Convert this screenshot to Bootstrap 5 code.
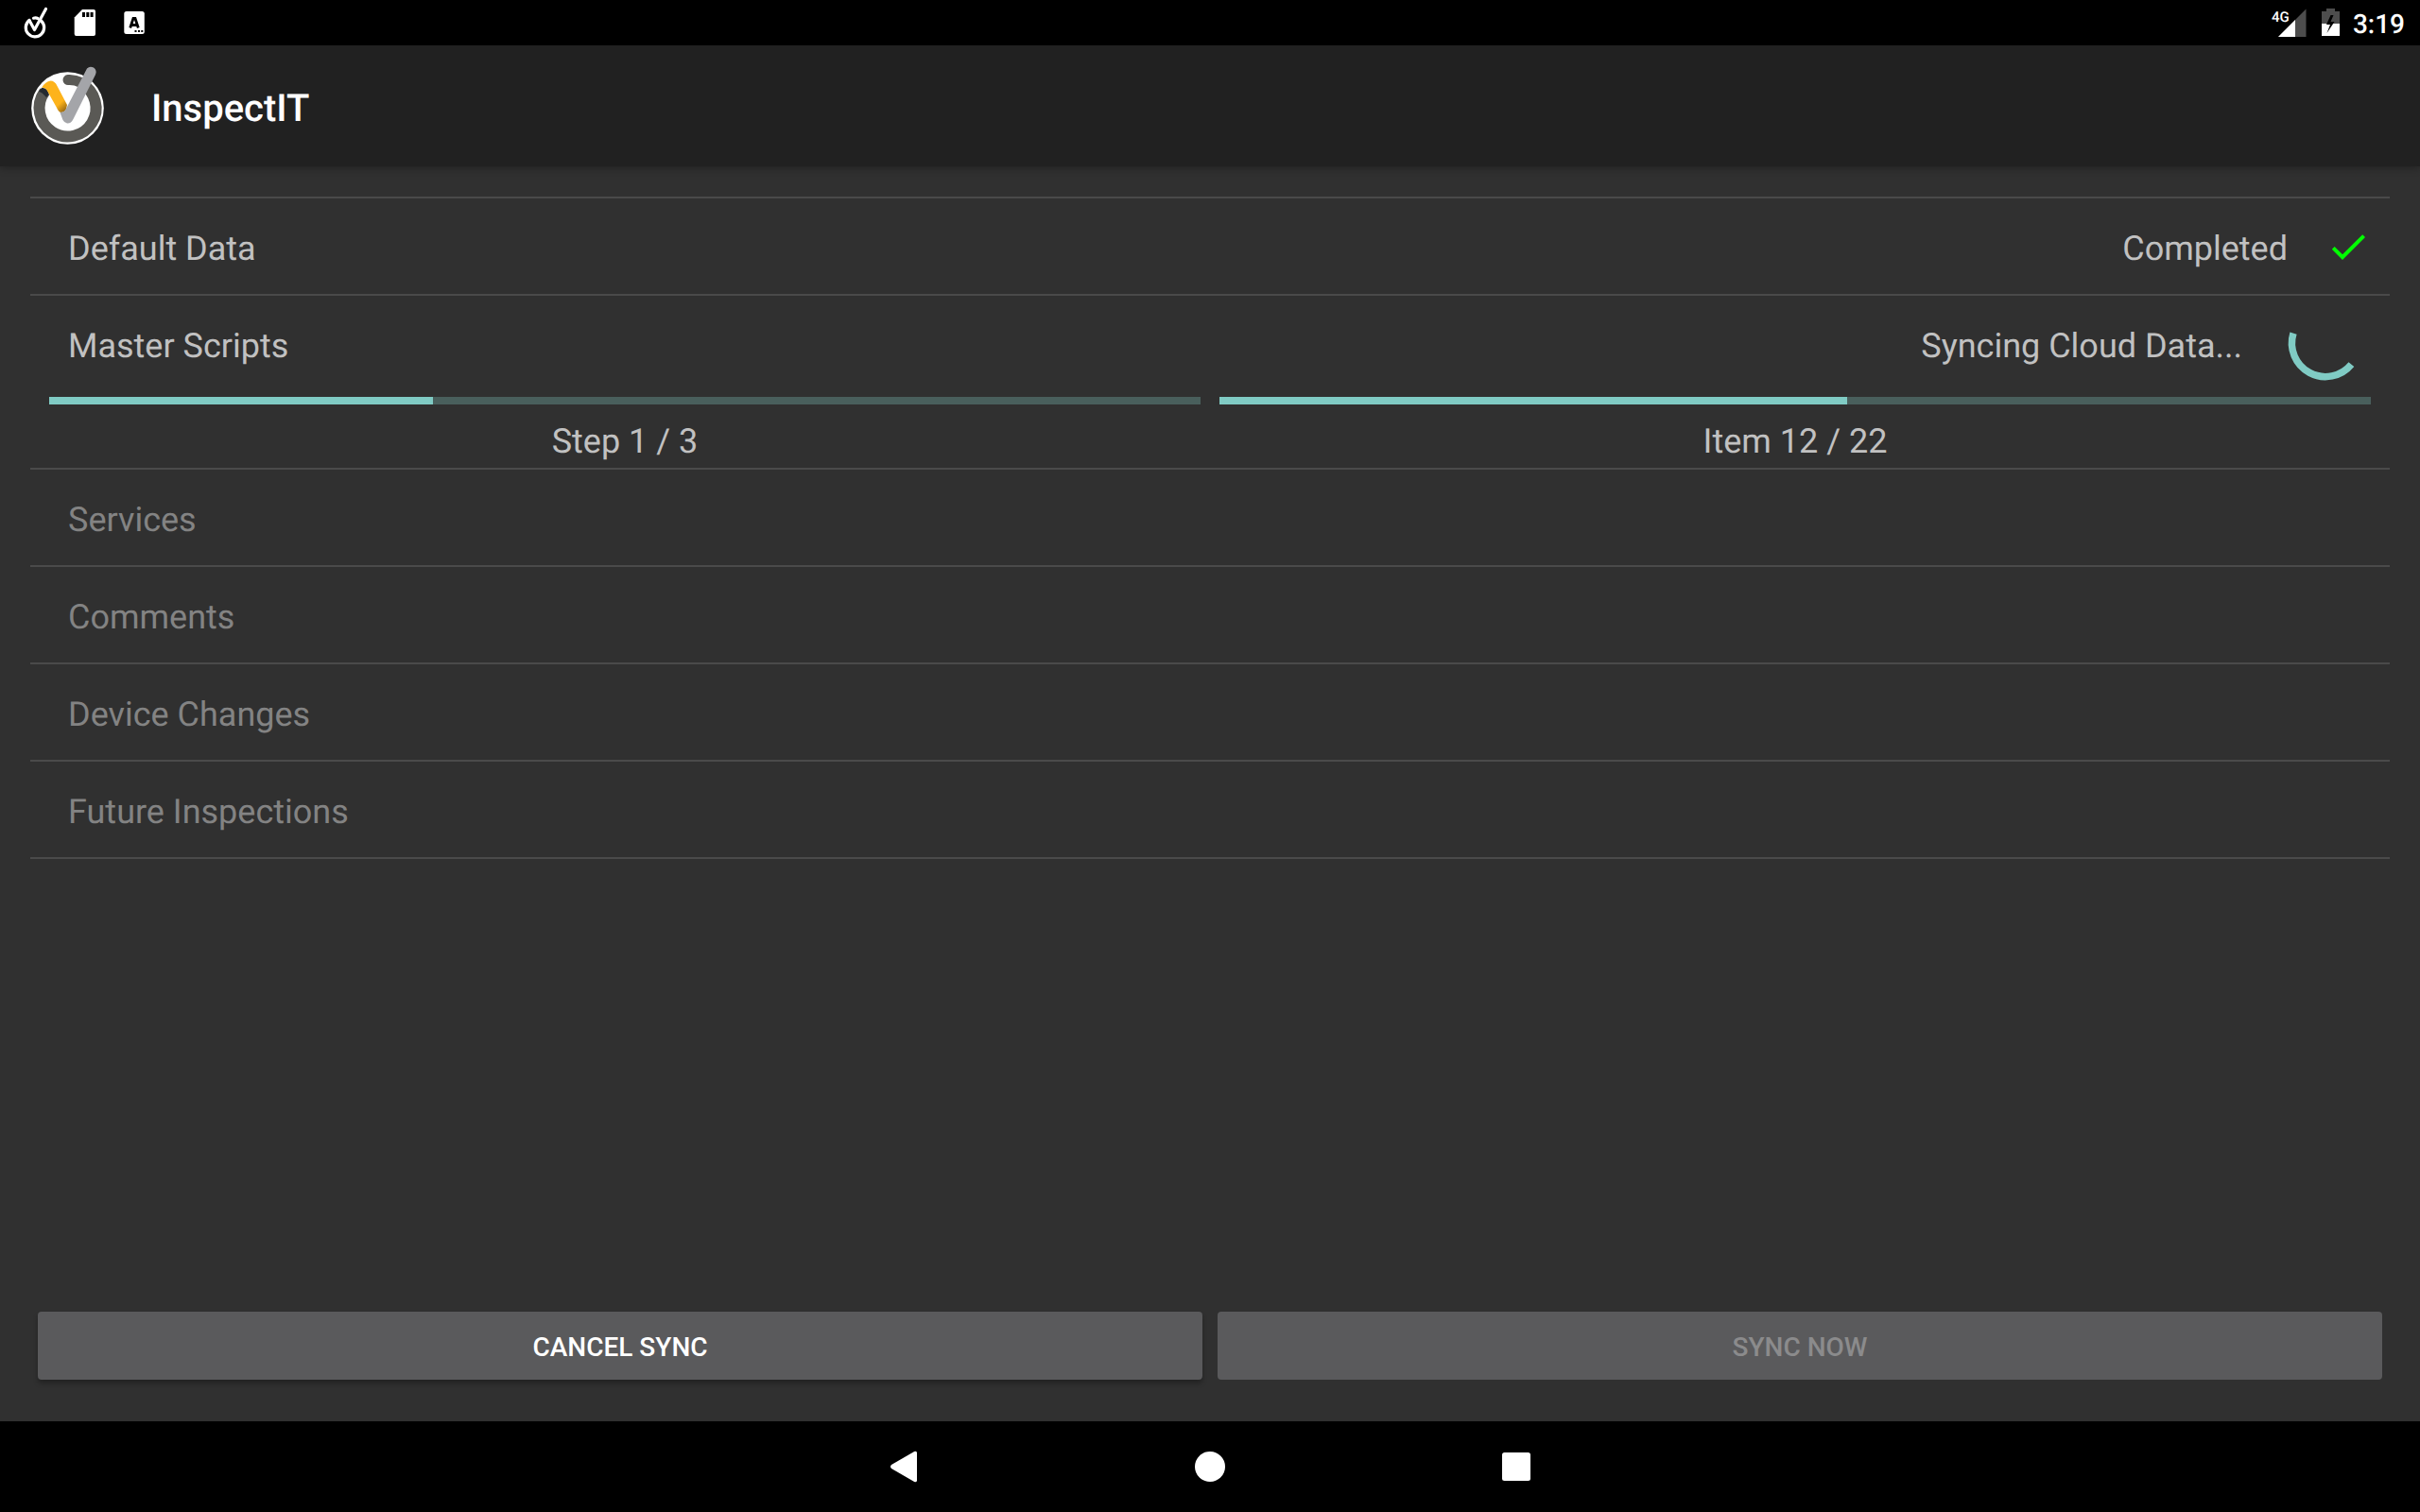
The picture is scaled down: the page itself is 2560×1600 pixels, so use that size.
<!DOCTYPE html>
<html lang="en">
<head>
<meta charset="utf-8">
<meta name="viewport" content="width=device-width, initial-scale=1">
<title>InspectIT</title>
<link href="https://cdn.jsdelivr.net/npm/bootstrap@5.3.0/dist/css/bootstrap.min.css" rel="stylesheet">
<style>
  body { background: #303030; color: #c1c1c1; font-family: Roboto, sans-serif; font-size: 36px; line-height: 42px; text-rendering: geometricPrecision; }
  svg { display: block; flex-shrink: 0; }
  .status-bar { height: 48px; padding: 0 16px 0 22px; font-size: 28px; line-height: 32px; font-weight: 500; }
  .status-left { gap: 22px; }
  .clock { padding-top: 3px; }
  .app-bar { height: 128px; padding: 0 32px; gap: 48px; background: #212121; box-shadow: 0 2px 8px rgba(0,0,0,.3); }
  .app-title { font-size: 40px; line-height: 48px; font-weight: 500; padding-top: 6px; }
  .sync-area { padding: 32px 32px 0; }
  .sync-list { border-top: 2px solid #4a4a4a; }
  .sync-item { border-bottom: 2px solid #4a4a4a; }
  .sync-line { height: 101px; padding: 0 20px; }
  .sync-name { padding: 32px 20px 0; }
  .sync-state { padding-top: 32px; }
  .sync-right { gap: 40px; }
  .check-slot { padding-top: 27px; }
  .spin-slot { padding-top: 2px; }
  .waiting { color: #838383; }
  .bars { gap: 20px; padding: 0 20px 7px; margin-top: 6px; }
  .progress { --bs-progress-height: 8px; --bs-progress-bg: #495f5c; --bs-progress-bar-bg: #80cbc4; --bs-progress-border-radius: 0; }
  .bar-label { padding-top: 18px; }
  .actions { gap: 16px; padding: 0 40px 44px; }
  .sync-btn { --bs-btn-bg: #5a5a5c; --bs-btn-color: #fff; --bs-btn-border-width: 0; --bs-btn-border-radius: 4px;
    --bs-btn-font-size: 28px; --bs-btn-font-weight: 500; --bs-btn-line-height: 32px;
    --bs-btn-hover-bg: #666668; --bs-btn-hover-color: #fff; --bs-btn-disabled-bg: #5a5a5c; --bs-btn-disabled-color: #8b8b8c; --bs-btn-disabled-opacity: 1;
    padding-top: 22px; padding-bottom: 18px; }
  .sync-btn:enabled { box-shadow: 0 4px 5px rgba(0,0,0,.28); }
  .nav-keys { height: 96px; gap: 164px; }
  .nav-key { width: 160px; }
</style>
<script src="https://cdn.jsdelivr.net/npm/bootstrap@5.3.0/dist/js/bootstrap.bundle.min.js" defer></script>
</head>
<body class="d-flex flex-column min-vh-100">

<div class="status-bar bg-black text-white d-flex align-items-center justify-content-between">
  <div class="status-left d-flex align-items-center">
    <svg width="30" height="48" viewBox="22 0 30 48" fill="none" stroke="#fff" aria-hidden="true">
      <path d="M31 21.500A9.700 9.700 0 1 0 43.500 22M35.500 19.200Q38 18.600 40 19.500" stroke-width="3.200" stroke-linecap="round"/>
      <path d="M31 21.500 36.500 31.500 48.500 9.500" stroke-width="3.200" stroke-linecap="round" stroke-linejoin="round"/>
    </svg>
    <svg width="30" height="48" viewBox="74 0 30 48" aria-hidden="true">
      <path d="M87 10h12q2 0 2 2v24q0 2-2 2H80.700q-2 0-2-2V18.500z" fill="#fff"/>
      <path d="M87 13h3v5h-3zM91.300 13h3v5h-3zM95.600 13h3v5h-3z" fill="#000"/>
    </svg>
    <svg width="30" height="48" viewBox="126 0 30 48" aria-hidden="true">
      <rect x="131.300" y="12" width="21.500" height="24" rx="2.500" fill="#fff"/>
      <path d="M137.700 29.500 141 19.500h2L146.300 29.500M139.500 26.500h5" fill="none" stroke="#000" stroke-width="2.800"/>
      <path d="M142.500 32h2v2h-2zM146 32h2v2h-2zM149.300 32h2v2h-2z" fill="#000"/>
    </svg>
  </div>
  <div class="d-flex align-items-center">
    <svg width="89" height="48" viewBox="2400 0 89 48" role="img" aria-label="4G signal, battery charging">
      <path d="M2410 39 2439.500 9.500V39z" fill="#4d4d4d"/>
      <path d="M2410 39 2428 21V39z" fill="#fff"/>
      <text x="2403" y="23" font-size="15" font-weight="500" fill="#fff">4G</text>
      <path d="M2456 12h5V9h9v3h5v13h-19z" fill="#4d4d4d"/>
      <path d="M2456 25h19v13h-19z" fill="#fff"/>
      <path d="M2465.500 16 2461 26h4l-3.500 9 8-12h-4l3-7z" fill="#000"/>
    </svg>
    <span class="clock">3:19</span>
  </div>
</div>

<header class="app-bar d-flex align-items-center">
  <svg width="80" height="128" viewBox="32 48 80 128" role="img" aria-label="InspectIT logo">
    <defs>
      <linearGradient id="gold" x1="46" y1="92" x2="68" y2="116" gradientUnits="userSpaceOnUse">
        <stop offset="0" stop-color="#fdb31b"/><stop offset=".75" stop-color="#fdb31b"/><stop offset="1" stop-color="#a87414"/>
      </linearGradient>
    </defs>
    <circle cx="71.500" cy="114.500" r="38.300" fill="#fff"/>
    <path d="M47.200 97A30 30 0 1 0 86 88.200" fill="none" stroke="#5a5955" stroke-width="12"/>
    <path d="M72 84.500Q79 84 86 87.500" fill="none" stroke="#5a5955" stroke-width="11" stroke-linecap="round"/>
    <path d="M44 93Q50 92 52 100L49 103Q44 97 41 97z" fill="#252a30"/>
    <path d="M44 93Q48 86 53.500 85.500Q58 85.500 60.500 91L71 111Q70 119 65 119Q62 119 60 114L50.500 97Q48 92 44 93z" fill="url(#gold)"/>
    <path d="M66 118.500Q69 118 71 113L92 72.500Q95 69.500 99 71.500Q103 74.500 101 79L77.500 126Q75 131 71 130.500Q68 130 66.500 127L63.500 119z" fill="#a4a5a9"/>
  </svg>
  <h1 class="app-title text-white mb-0">InspectIT</h1>
</header>

<main class="sync-area flex-grow-1">
  <ul class="sync-list list-unstyled m-0">
    <li class="sync-item">
      <div class="sync-line d-flex justify-content-between">
        <span class="sync-name">Default Data</span>
        <div class="sync-right d-flex">
          <span class="sync-state">Completed</span>
          <div class="check-slot">
            <svg width="48" height="48" viewBox="0 0 24 24" fill="#0f0" aria-hidden="true"><path d="M9 16.170 4.830 12l-1.420 1.410L9 19 21 7l-1.410-1.410z"/></svg>
          </div>
        </div>
      </div>
    </li>
    <li class="sync-item">
      <div class="sync-line d-flex justify-content-between">
        <span class="sync-name">Master Scripts</span>
        <div class="sync-right d-flex">
          <span class="sync-state">Syncing Cloud Data...</span>
          <div class="spin-slot" role="status" aria-label="Syncing">
            <svg width="96" height="96" viewBox="0 0 96 96" fill="none" stroke="#80cbc4" stroke-width="7.500"><path d="M14 37.700A35.500 35.500 0 0 0 75.400 70.600"/></svg>
          </div>
        </div>
      </div>
      <div class="bars d-flex text-center">
        <div class="flex-fill w-50">
          <div class="progress" role="progressbar" aria-label="Steps" aria-valuenow="1" aria-valuemin="0" aria-valuemax="3"><div class="progress-bar" style="width:33.333%"></div></div>
          <div class="bar-label">Step 1 / 3</div>
        </div>
        <div class="flex-fill w-50">
          <div class="progress" role="progressbar" aria-label="Items" aria-valuenow="12" aria-valuemin="0" aria-valuemax="22"><div class="progress-bar" style="width:54.545%"></div></div>
          <div class="bar-label">Item 12 / 22</div>
        </div>
      </div>
    </li>
    <li class="sync-item waiting"><div class="sync-line d-flex"><span class="sync-name">Services</span></div></li>
    <li class="sync-item waiting"><div class="sync-line d-flex"><span class="sync-name">Comments</span></div></li>
    <li class="sync-item waiting"><div class="sync-line d-flex"><span class="sync-name">Device Changes</span></div></li>
    <li class="sync-item waiting"><div class="sync-line d-flex"><span class="sync-name">Future Inspections</span></div></li>
  </ul>
</main>

<div class="actions d-flex">
  <button type="button" class="btn sync-btn flex-fill w-50">CANCEL SYNC</button>
  <button type="button" class="btn sync-btn flex-fill w-50" disabled>SYNC NOW</button>
</div>

<nav class="nav-keys bg-black d-flex justify-content-center align-items-center" aria-label="System">
  <button type="button" class="nav-key btn p-0 border-0 d-flex justify-content-center" aria-label="Back">
    <svg width="40" height="40" viewBox="0 0 40 40" fill="#fff"><path d="M31.200 4Q34 3 34 5.500V34.500Q34 37 31.200 36L7 22Q5 20 7 18z"/></svg>
  </button>
  <button type="button" class="nav-key btn p-0 border-0 d-flex justify-content-center" aria-label="Home">
    <svg width="40" height="40" viewBox="0 0 40 40" fill="#fff"><circle cx="20" cy="20" r="16"/></svg>
  </button>
  <button type="button" class="nav-key btn p-0 border-0 d-flex justify-content-center" aria-label="Recent apps">
    <svg width="40" height="40" viewBox="0 0 40 40" fill="#fff"><rect x="5" y="5" width="30" height="30" rx="2.500"/></svg>
  </button>
</nav>
</body>
</html>
